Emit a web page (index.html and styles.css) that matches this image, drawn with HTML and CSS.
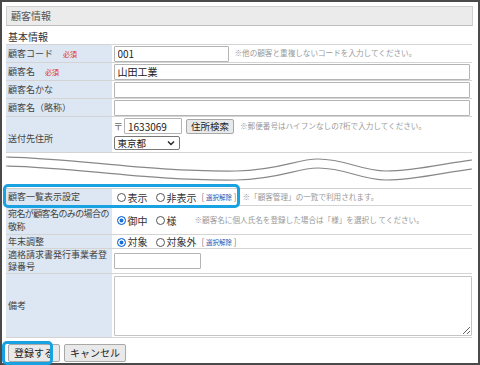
FILE: index.html
```html
<!DOCTYPE html><html lang="ja"><head><title>顧客情報</title>
<meta charset="utf-8"><link rel="stylesheet" href="styles.css"></head><body>
<div class="page">
	<div class="head">顧客情報</div>
	<div class="sub">基本情報</div>
	<table class="form">
		<colgroup><col class="c-label"><col></colgroup>
		<tr class="r18">
			<th>顧客コード <em>必須</em></th>
			<td><input class="code" type="text" value="001"><span class="note">※他の顧客と重複しないコードを入力してください。</span></td>
		</tr>
		<tr class="r18">
			<th>顧客名 <em>必須</em></th>
			<td><input class="full" type="text" value="山田工業"></td>
		</tr>
		<tr class="r18">
			<th>顧客名かな</th>
			<td><input class="full" type="text"></td>
		</tr>
		<tr class="r18">
			<th>顧客名（略称）</th>
			<td><input class="full" type="text"></td>
		</tr>
		<tr class="addr">
			<th>送付先住所</th>
			<td>
				<div class="line">〒<input class="zip" type="text" value="1633069"><button class="btn">住所検索</button><span class="note">※郵便番号はハイフンなしの7桁で入力してください。</span></div>
				<div class="line"><span class="sel">東京都<svg width="8" height="6" viewBox="0 0 8 6"><path d="M1 1.5 L4 4.5 L7 1.5" fill="none" stroke="#222" stroke-width="1.4"/></svg></span></div>
			</td>
		</tr>
		<tr class="cut">
			<td colspan="2"><svg width="466" height="34" viewBox="0 0 466 34">
				<path d="M0 3 C70 4 140 18 230 17 C275 16 290 5 312 5 C340 5 355 17 380 17 C410 17 440 9 466 6" fill="none" stroke="#888" stroke-width="1.2"/>
				<path d="M0 12 C70 13 140 27 230 26 C275 25 290 14 312 14 C340 14 355 26 380 26 C410 26 440 18 466 15" fill="none" stroke="#888" stroke-width="1.2"/>
			</svg></td>
		</tr>
		<tr class="r17">
			<th>顧客一覧表示設定</th>
			<td><label><input type="radio" name="disp">表示</label><label><input type="radio" name="disp">非表示</label><span class="clear">[ <a>選択解除</a> ]</span><span class="note">※「顧客管理」の一覧で利用されます。</span></td>
		</tr>
		<tr class="r30">
			<th class="two tight">宛名が顧客名のみの場合の<br>敬称</th>
			<td><label><input type="radio" name="hon" checked>御中</label><label><input type="radio" name="hon">様</label><span class="note wide">※顧客名に個人氏名を登録した場合は「様」を選択し てください。</span></td>
		</tr>
		<tr class="r13">
			<th>年末調整</th>
			<td><label><input type="radio" name="nen" checked>対象</label><label><input type="radio" name="nen">対象外</label><span class="clear">[ <a>選択解除</a> ]</span></td>
		</tr>
		<tr class="r22">
			<th class="two small">適格請求書発行事業者登<br>録番号</th>
			<td><input class="inv" type="text"></td>
		</tr>
		<tr class="memo">
			<th>備考</th>
			<td><textarea></textarea></td>
		</tr>
	</table>
	<div class="actions">
		<button class="btn big">登録する</button><button class="btn big">キャンセル</button>
	</div>
	<div class="mark row-mark"></div>
	<div class="mark btn-mark"></div>
</div>
</body></html>
```

FILE: styles.css
```css
*{box-sizing: border-box;}
body{
	margin: 0;
	background: #fff;
	font-family: "Noto Sans CJK JP", "Noto Sans", sans-serif;
	font-size: 9.5px;
	color: #444;
}
.page{
	position: relative;
	width: 480px;
	height: 365px;
	border: 2px solid #4a4a4a;
	padding: 4px 0 0 4px;
}
.head{
	width: 467px;
	height: 20px;
	line-height: 18px;
	padding-left: 4px;
	background: #ebebeb;
	border: 1px solid #cfcfcf;
	border-bottom-color: #bdbdbd;
	color: #555;
	font-size: 10px;
}
.sub{
	height: 18px;
	line-height: 14px;
	padding: 4px 0 0 2px;
	color: #333;
	font-size: 10px;
}
.form{
	width: 466px;
	table-layout: fixed;
	border-collapse: collapse;
	border-top: 1px solid #d4d4d4;
}
.c-label{width: 105px;}
.form th, .form td{
	padding: 0 2px;
	border-bottom: 1px solid #d4d4d4;
	line-height: 12px;
	vertical-align: middle;
	overflow: visible;
}
.form th{
	background: #dce7f3;
	text-align: left;
	font-weight: normal;
	font-size: 9px;
	color: #444;
	white-space: nowrap;
	border-right: 1px solid #e4e4e4;
}
.form th.two{line-height: 13px;}
.form th.small{line-height: 12px;}
.form th.tight{letter-spacing: -0.6px;}
.form em{
	font-style: normal;
	color: #e03030;
	font-size: 7px;
	margin-left: 8px;
}
.r18 th, .r18 td{height: 18px;}
.r17 th, .r17 td{height: 17px;}
.r30 th, .r30 td{height: 29px;}
.r13 th, .r13 td{height: 13px;}
.r22 th, .r22 td{height: 24px;}
.memo th, .memo td{height: 64px;}

input[type=text]{
	height: 16px;
	border: 1px solid #b4b4b4;
	border-radius: 1px;
	padding: 0 3px;
	font: inherit;
	font-size: 10px;
	color: #222;
	vertical-align: middle;
}
.code{width: 115px;}
.full{width: 356px; display: block;}
.zip{width: 58px; margin-left: 1px;}
.inv{width: 87px; display: block;}

.note{
	margin-left: 6px;
	color: #999;
	font-size: 7.6px;
	line-height: 12px;
	white-space: nowrap;
}
.note.wide{margin-left: 13px;}

.addr th, .addr td{height: 36px;}
.addr th{vertical-align: bottom; padding-bottom: 7px;}
.addr .line{height: 16px; display: flex; align-items: center; color: #666;}
.addr .line + .line{margin-top: 1px;}
.btn{
	height: 15px;
	margin-left: 4px;
	padding: 0 4px;
	border: 1px solid #a8a8a8;
	border-radius: 2px;
	background: #e9e9e9;
	font: inherit;
	font-size: 9.5px;
	line-height: 12px;
	color: #222;
}
.sel{
	display: inline-flex;
	align-items: center;
	justify-content: space-between;
	width: 66px;
	height: 14px;
	padding: 0 4px 0 3px;
	border: 1px solid #777;
	border-radius: 2px;
	color: #222;
	font-size: 9.5px;
}

.cut td{
	height: 34px;
	padding: 0;
	background: #fff;
	border-bottom: 1px solid #cfcfcf;
	line-height: 0;
}
.cut svg{display: block; margin-top: 1px;}

label{
	display: inline-flex;
	align-items: center;
	margin-right: 5px;
	color: #333;
	font-size: 10px;
	line-height: 12px;
	vertical-align: middle;
}
input[type=radio]{
	appearance: none;
	width: 9px;
	height: 9px;
	margin: 0 2px 0 3px;
	border: 1px solid #555;
	border-radius: 50%;
	background: #fff;
}
input[type=radio]:checked{
	border-color: #1b6fd8;
	background: #1b6fd8;
	box-shadow: inset 0 0 0 1.5px #fff;
}
.clear{
	color: #777;
	font-size: 8px;
	line-height: 12px;
}
.clear a{
	color: #2a52b0;
	font-size: 6.5px;
}

textarea{
	display: block;
	width: 358px;
	height: 60px;
	border: 1px solid #c4c4c4;
	border-radius: 1px;
}

.actions{
	display: flex;
	padding: 6px 0 0 2px;
}
.actions .btn{
	height: 18px;
	margin: 0 4px 0 0;
	padding: 0 5px;
	font-size: 10px;
}

.mark{
	position: absolute;
	border: 3px solid #19a2e2;
	border-radius: 5px;
}
.row-mark{left: 1px; top: 182px; width: 237px; height: 24px;}
.btn-mark{left: 0; top: 339px; width: 51px; height: 24px;}
```
